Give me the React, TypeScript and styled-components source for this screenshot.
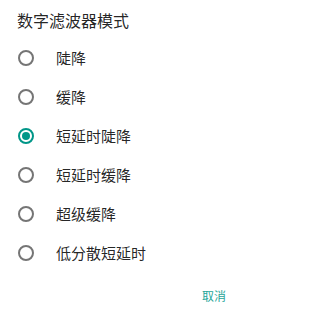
import React, { useState } from "react";
import styled, { createGlobalStyle } from "styled-components";

const GlobalStyle = createGlobalStyle`
  html, body {
    margin: 0;
    padding: 0;
    background: #ffffff;
  }
  body {
    font-family: Roboto, "Noto Sans CJK SC", sans-serif;
  }
`;

const options = ["陡降", "缓降", "短延时陡降", "短延时缓降", "超级缓降", "低分散短延时"];

function App() {
  const [selected, setSelected] = useState(2);

  return (
    <>
      <GlobalStyle />
      <Dialog>
        <Title>数字滤波器模式</Title>
        <List>
          {options.map((label, i) => (
            <Row key={label} onClick={() => setSelected(i)}>
              <Radio checked={i === selected} />
              <Label>{label}</Label>
            </Row>
          ))}
        </List>
        <Actions>
          <TextButton>取消</TextButton>
        </Actions>
      </Dialog>
    </>
  );
}

export default App;

const Dialog = styled.div`
  width: 241px;
  height: 313px;
  box-sizing: border-box;
  display: flex;
  flex-direction: column;
  background: #ffffff;
`;

const Title = styled.div`
  padding: 9px 0 0 17px;
  height: 22px;
  font-size: 16px;
  line-height: 22px;
  color: rgba(0, 0, 0, 0.87);
  font-family: "Noto Sans CJK SC", sans-serif;
`;

const List = styled.div`
  display: flex;
  flex-direction: column;
  padding-top: 7px;
`;

const Row = styled.div`
  display: flex;
  align-items: center;
  height: 39px;
  padding-left: 18px;
  cursor: pointer;
`;

const Radio = styled.span<{ checked: boolean }>`
  position: relative;
  width: 16px;
  height: 16px;
  box-sizing: border-box;
  border-radius: 50%;
  border: 2px solid ${(p) => (p.checked ? "#009688" : "#757575")};
  flex-shrink: 0;

  &::after {
    content: "";
    position: absolute;
    left: 2px;
    top: 2px;
    width: 8px;
    height: 8px;
    border-radius: 50%;
    background: #009688;
    display: ${(p) => (p.checked ? "block" : "none")};
  }
`;

const Label = styled.span`
  margin-left: 22px;
  font-size: 15px;
  color: rgba(0, 0, 0, 0.87);
  font-family: "Noto Sans CJK SC", sans-serif;
`;

const Actions = styled.div`
  display: flex;
  justify-content: flex-end;
  margin-top: auto;
  padding: 0 15px 9px 0;
`;

const TextButton = styled.span`
  font-size: 12px;
  line-height: 16px;
  color: #26a69a;
  font-family: "Noto Sans CJK SC", sans-serif;
`;
